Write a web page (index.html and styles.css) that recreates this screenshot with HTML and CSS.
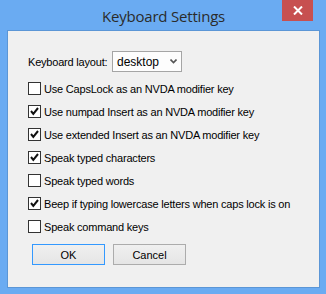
FILE: index.html
```html
<!doctype html>
<html>
<head>
    <meta charset="utf-8">
    <title>Keyboard Settings</title>
    <link rel="stylesheet" href="styles.css">
</head>
<body>
    <div class="window">
        <header class="titlebar">
            <span class="title">Keyboard Settings</span>
            <a class="close" href="#">
                <svg width="10" height="9" viewBox="0 0 10 9">
                    <path d="M1 0.5 L9 8.5 M9 0.5 L1 8.5" stroke="#fff" stroke-width="2"/>
                </svg>
            </a>
        </header>
        <section class="client">
            <div class="layout_row">
                <label>Keyboard layout:</label>
                <div class="select">
                    <span>desktop</span>
                    <svg width="7" height="5" viewBox="0 0 7 5">
                        <path d="M0.5 0.5 L3.5 3.5 L6.5 0.5" stroke="#555" stroke-width="1.6" fill="none"/>
                    </svg>
                </div>
            </div>
            <ul class="options">
                <li class="first"><span class="box"></span>Use CapsLock as an NVDA modifier key</li>
                <li><span class="box"><svg viewBox="0 0 11 11"><path d="M2 5 L4.3 7.8 L9 2" stroke="#111" stroke-width="2" fill="none"/></svg></span>Use numpad Insert as an NVDA modifier key</li>
                <li><span class="box"><svg viewBox="0 0 11 11"><path d="M2 5 L4.3 7.8 L9 2" stroke="#111" stroke-width="2" fill="none"/></svg></span>Use extended Insert as an NVDA modifier key</li>
                <li><span class="box"><svg viewBox="0 0 11 11"><path d="M2 5 L4.3 7.8 L9 2" stroke="#111" stroke-width="2" fill="none"/></svg></span>Speak typed characters</li>
                <li><span class="box"></span>Speak typed words</li>
                <li><span class="box"><svg viewBox="0 0 11 11"><path d="M2 5 L4.3 7.8 L9 2" stroke="#111" stroke-width="2" fill="none"/></svg></span>Beep if typing lowercase letters when caps lock is on</li>
                <li><span class="box"></span>Speak command keys</li>
            </ul>
            <div class="buttons">
                <button class="btn default">OK</button>
                <button class="btn">Cancel</button>
            </div>
        </section>
    </div>
</body>
</html>
```

FILE: styles.css
```css
html, body{
    margin: 0;
    padding: 0;
}
body{
    width: 326px;
    height: 294px;
    overflow: hidden;
}
.window{
    display: flex;
    flex-direction: column;
    width: 326px;
    height: 294px;
    box-sizing: border-box;
    background-color: #6aabf2;
    padding: 0 6px 6px 7px;
}
.titlebar{
    position: relative;
    height: 30px;
    display: flex;
    align-items: center;
    justify-content: center;
}
.title{
    font-family: "Open Sans", sans-serif;
    font-size: 15px;
    letter-spacing: -0.2px;
    color: #2b2b2b;
    margin-top: 1px;
}
.close{
    position: absolute;
    top: 0;
    right: 7px;
    width: 31px;
    height: 21px;
    background-color: #c75050;
    display: flex;
    align-items: center;
    justify-content: center;
}
.client{
    flex: 1;
    background-color: #f0f0f0;
    border: 1px solid #5b96d6;
    padding: 20px 0 0 20px;
    font-family: "Liberation Sans", Arial, sans-serif;
    font-size: 11px;
    letter-spacing: -0.2px;
    color: #000;
}
.layout_row{
    display: flex;
    align-items: center;
    height: 21px;
}
.layout_row label{
    width: 84px;
}
.select{
    height: 19px;
    border: 1px solid #a5a5a5;
    background-color: #fdfdfd;
    display: flex;
    align-items: center;
    justify-content: space-between;
    padding: 0 4px 0 4px;
    width: 60px;
    font-size: 12px;
    letter-spacing: 0;
}
.options{
    list-style: none;
    margin: 0;
    padding: 0;
}
.options li{
    display: flex;
    align-items: center;
    height: 13px;
    margin-top: 10px;
}
.box{
    width: 11px;
    height: 11px;
    border: 1px solid #333;
    background-color: #fff;
    margin-right: 3px;
    display: flex;
}
.box svg{
    width: 11px;
    height: 11px;
}
.buttons{
    display: flex;
    gap: 8px;
    margin-top: 11px;
    margin-left: 4px;
}
.btn{
    width: 73px;
    height: 21px;
    border: 1px solid #acacac;
    background: linear-gradient(#f0f0f0, #e5e5e5);
    font-family: "Liberation Sans", Arial, sans-serif;
    font-size: 11px;
    color: #000;
    padding: 0;
}
.btn.default{
    border-color: #3399ff;
}
```
